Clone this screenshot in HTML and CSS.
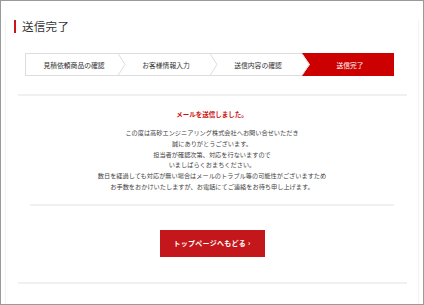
FILE: index.html
```html
<!DOCTYPE html>
<html lang="ja">
<head>
    <meta charset="UTF-8">
    <meta name="viewport" content="width=device-width, initial-scale=1.0">
    <title>送信完了</title>
    <link rel="stylesheet" href="styles.css">
</head>
<body>
    <div class="frame">
        <div class="panel">
            <h1 class="page-title">送信完了</h1>

            <ol class="steps">
                <li class="step">見積依頼商品の確認
                    <svg class="chevron" viewBox="0 0 8 22" width="8" height="22"><polygon points="0,0 8,11 0,22" fill="#fff"/><polyline points="0,0 7,11 0,22" fill="none" stroke="#ddd" stroke-width="1"/></svg>
                </li>
                <li class="step">お客様情報入力
                    <svg class="chevron" viewBox="0 0 8 22" width="8" height="22"><polygon points="0,0 8,11 0,22" fill="#fff"/><polyline points="0,0 7,11 0,22" fill="none" stroke="#ddd" stroke-width="1"/></svg>
                </li>
                <li class="step">送信内容の確認
                    <svg class="chevron" viewBox="0 0 8 22" width="8" height="22"><polygon points="0,0 8,11 0,22" fill="#fff"/><polyline points="0,0 7,11 0,22" fill="none" stroke="#ddd" stroke-width="1"/></svg>
                </li>
                <li class="step current">送信完了</li>
            </ol>

            <div class="divider"></div>

            <div class="message">
                <p class="message-title">メールを送信しました。</p>
                <p class="message-body">
                    この度は高砂エンジニアリング株式会社へお問い合せいただき<br>
                    誠にありがとうございます。<br>
                    担当者が確認次第、対応を行ないますので<br>
                    いましばらくおまちください。<br>
                    数日を経過しても対応が無い場合はメールのトラブル等の可能性がございますため<br>
                    お手数をおかけいたしますが、お電話にてご連絡をお待ち申し上げます。
                </p>
            </div>

            <div class="divider divider-short"></div>

            <div class="actions">
                <a href="#" class="btn-top">トップページへもどる ›</a>
            </div>

            <div class="divider divider-bottom"></div>
        </div>
    </div>
</body>
</html>
```

FILE: styles.css
```css
* {
    box-sizing: border-box;
}

body {
    margin: 0;
    font-family: "Noto Sans CJK JP", "Noto Sans", sans-serif;
    color: #444;
    background-color: #fff;
}

.frame {
    width: 424px;
    height: 305px;
    border: 1px solid #9a9a9a;
    overflow: hidden;
}

.panel {
    margin: 0 4px;
    height: 100%;
    border-left: 1px solid #f2f2f2;
    border-right: 1px solid #f2f2f2;
}

.page-title {
    margin: 19px 0 0 8px;
    padding-left: 6px;
    border-left: 2px solid #c8161d;
    font-size: 11.5px;
    line-height: 13px;
    font-weight: normal;
    color: #333;
    letter-spacing: 0.3px;
}

.steps {
    display: flex;
    list-style: none;
    margin: 20px 0 0 19px;
    padding: 0;
    width: 369px;
    height: 23px;
    border: 1px solid #ddd;
    border-right: none;
}

.step {
    position: relative;
    flex: 1;
    display: flex;
    align-items: center;
    justify-content: center;
    padding-left: 4px;
    font-size: 6.8px;
    color: #333;
    white-space: nowrap;
}

.step.current {
    background-color: #cc0000;
    color: #fff;
    margin: -1px 0;
}

.chevron {
    position: absolute;
    top: -1px;
    right: -8px;
    height: 23px;
    z-index: 1;
}

.divider {
    height: 2px;
    margin: 18px 11px 0 12px;
    background-color: #f0f0f0;
}

.divider-short {
    margin: 11px 24px 0 24px;
}

.divider-bottom {
    margin-top: 25px;
}

.message {
    text-align: center;
}

.message-title {
    margin: 14px 0 0;
    font-size: 6.5px;
    line-height: 9px;
    font-weight: bold;
    color: #cc1111;
}

.message-body {
    margin: 9px 0 0;
    font-size: 6.2px;
    line-height: 10.8px;
    color: #444;
}

.actions {
    margin-top: 21px;
    text-align: center;
}

.btn-top {
    display: inline-block;
    width: 105px;
    height: 27px;
    line-height: 27px;
    background-color: #c3171b;
    color: #fff;
    font-size: 7px;
    font-weight: bold;
    letter-spacing: 0.3px;
    text-decoration: none;
}
```
